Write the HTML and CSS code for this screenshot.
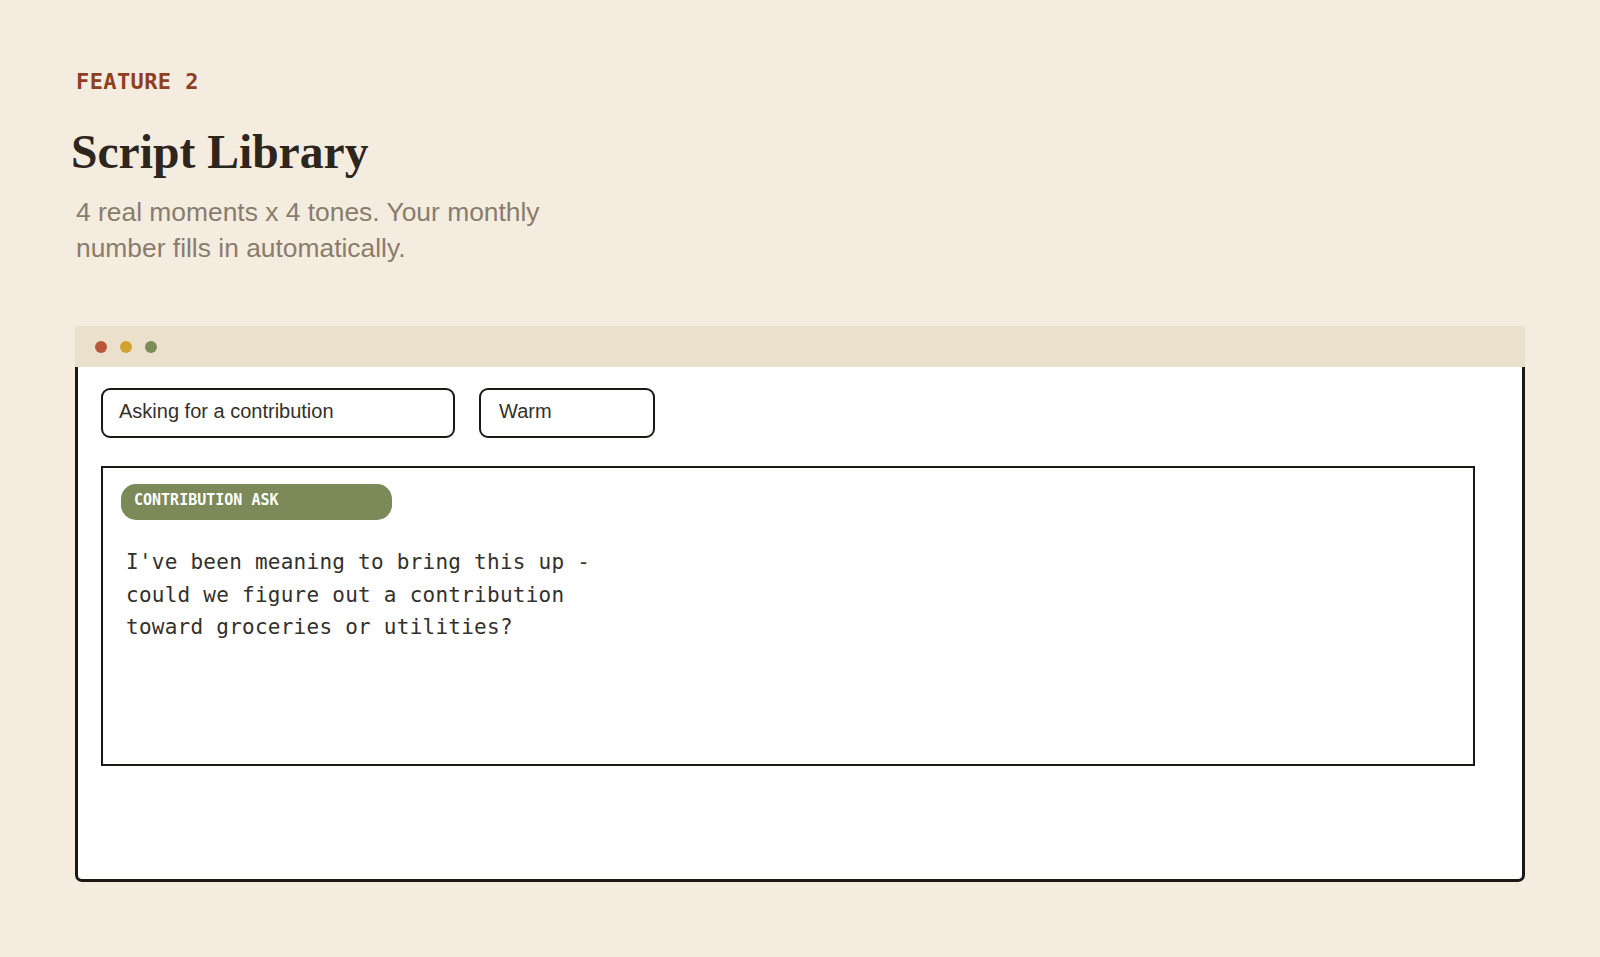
FILE: index.html
```html
<!DOCTYPE html>
<html lang="en">
<head>
<meta charset="utf-8">
<title>Script Library</title>
<link rel="stylesheet" href="styles.css">
</head>
<body>
<main class="page">
  <header class="intro">
    <div class="eyebrow">FEATURE 2</div>
    <h1 class="title">Script Library</h1>
    <p class="lede">4 real moments x 4 tones. Your monthly number fills in automatically.</p>
  </header>

  <section class="window">
    <div class="titlebar">
      <span class="dot dot-red"></span>
      <span class="dot dot-yellow"></span>
      <span class="dot dot-green"></span>
    </div>
    <div class="window-body">
      <div class="controls">
        <div class="select select-moment">Asking for a contribution</div>
        <div class="select select-tone">Warm</div>
      </div>
      <div class="script-card">
        <div class="badge">CONTRIBUTION ASK</div>
        <p class="script-text">I've been meaning to bring this up - could we figure out a contribution toward groceries or utilities?</p>
      </div>
    </div>
  </section>
</main>
</body>
</html>
```

FILE: styles.css
```css
* {
  box-sizing: border-box;
}

html,
body {
  margin: 0;
  padding: 0;
  background: #f5ece0;
}

body {
  font-family: "Liberation Sans", Arial, sans-serif;
  color: #2e251d;
}

.page {
  padding: 69px 75px 0 75px;
}

.intro {
  padding-left: 1px;
}

.eyebrow {
  font-family: "DejaVu Sans Mono", "Liberation Mono", monospace;
  font-weight: bold;
  font-size: 22px;
  line-height: 26px;
  letter-spacing: 0.4px;
  color: #8e3f22;
}

.title {
  margin: 29px 0 0 -5px;
  font-family: "Liberation Serif", "Times New Roman", serif;
  font-weight: bold;
  font-size: 47.6px;
  line-height: 56px;
  color: #2e251d;
}

.lede {
  margin: 14px 0 0 0;
  max-width: 510px;
  font-size: 26.4px;
  line-height: 36px;
  color: #8a7c6c;
}

.window {
  margin-top: 60px;
}

.titlebar {
  height: 41px;
  background: #ebe0cc;
  display: flex;
  align-items: center;
  gap: 13px;
  padding-left: 20px;
}

.dot {
  width: 12px;
  height: 12px;
  border-radius: 50%;
}

.dot-red {
  background: #b9573a;
}

.dot-yellow {
  background: #d3a130;
}

.dot-green {
  background: #7b8c57;
}

.window-body {
  height: 515px;
  background: #ffffff;
  border: 3px solid #1c1814;
  border-top: none;
  border-radius: 0 0 7px 7px;
  padding: 21px 47px 0 23px;
}

.controls {
  display: flex;
  gap: 24px;
}

.select {
  height: 50px;
  border: 2px solid #1c1814;
  border-radius: 9px;
  background: #ffffff;
  display: flex;
  align-items: center;
  padding-bottom: 4px;
  font-size: 20px;
  color: #333029;
}

.select-moment {
  width: 354px;
  padding-left: 16px;
}

.select-tone {
  width: 176px;
  padding-left: 18px;
}

.script-card {
  margin-top: 28px;
  height: 300px;
  border: 2px solid #1c1814;
  background: #ffffff;
  padding: 16px 18px;
}

.badge {
  width: 271px;
  height: 36px;
  border-radius: 15px;
  background: #7b8a58;
  color: #ffffff;
  font-family: "DejaVu Sans Mono", "Liberation Mono", monospace;
  font-weight: bold;
  font-size: 15px;
  line-height: 33px;
  padding-left: 13px;
}

.script-text {
  margin: 26px 0 0 0;
  padding-left: 5px;
  max-width: 500px;
  font-family: "DejaVu Sans Mono", "Liberation Mono", monospace;
  font-size: 21px;
  letter-spacing: 0.25px;
  line-height: 32.5px;
  color: #34302b;
}
```
